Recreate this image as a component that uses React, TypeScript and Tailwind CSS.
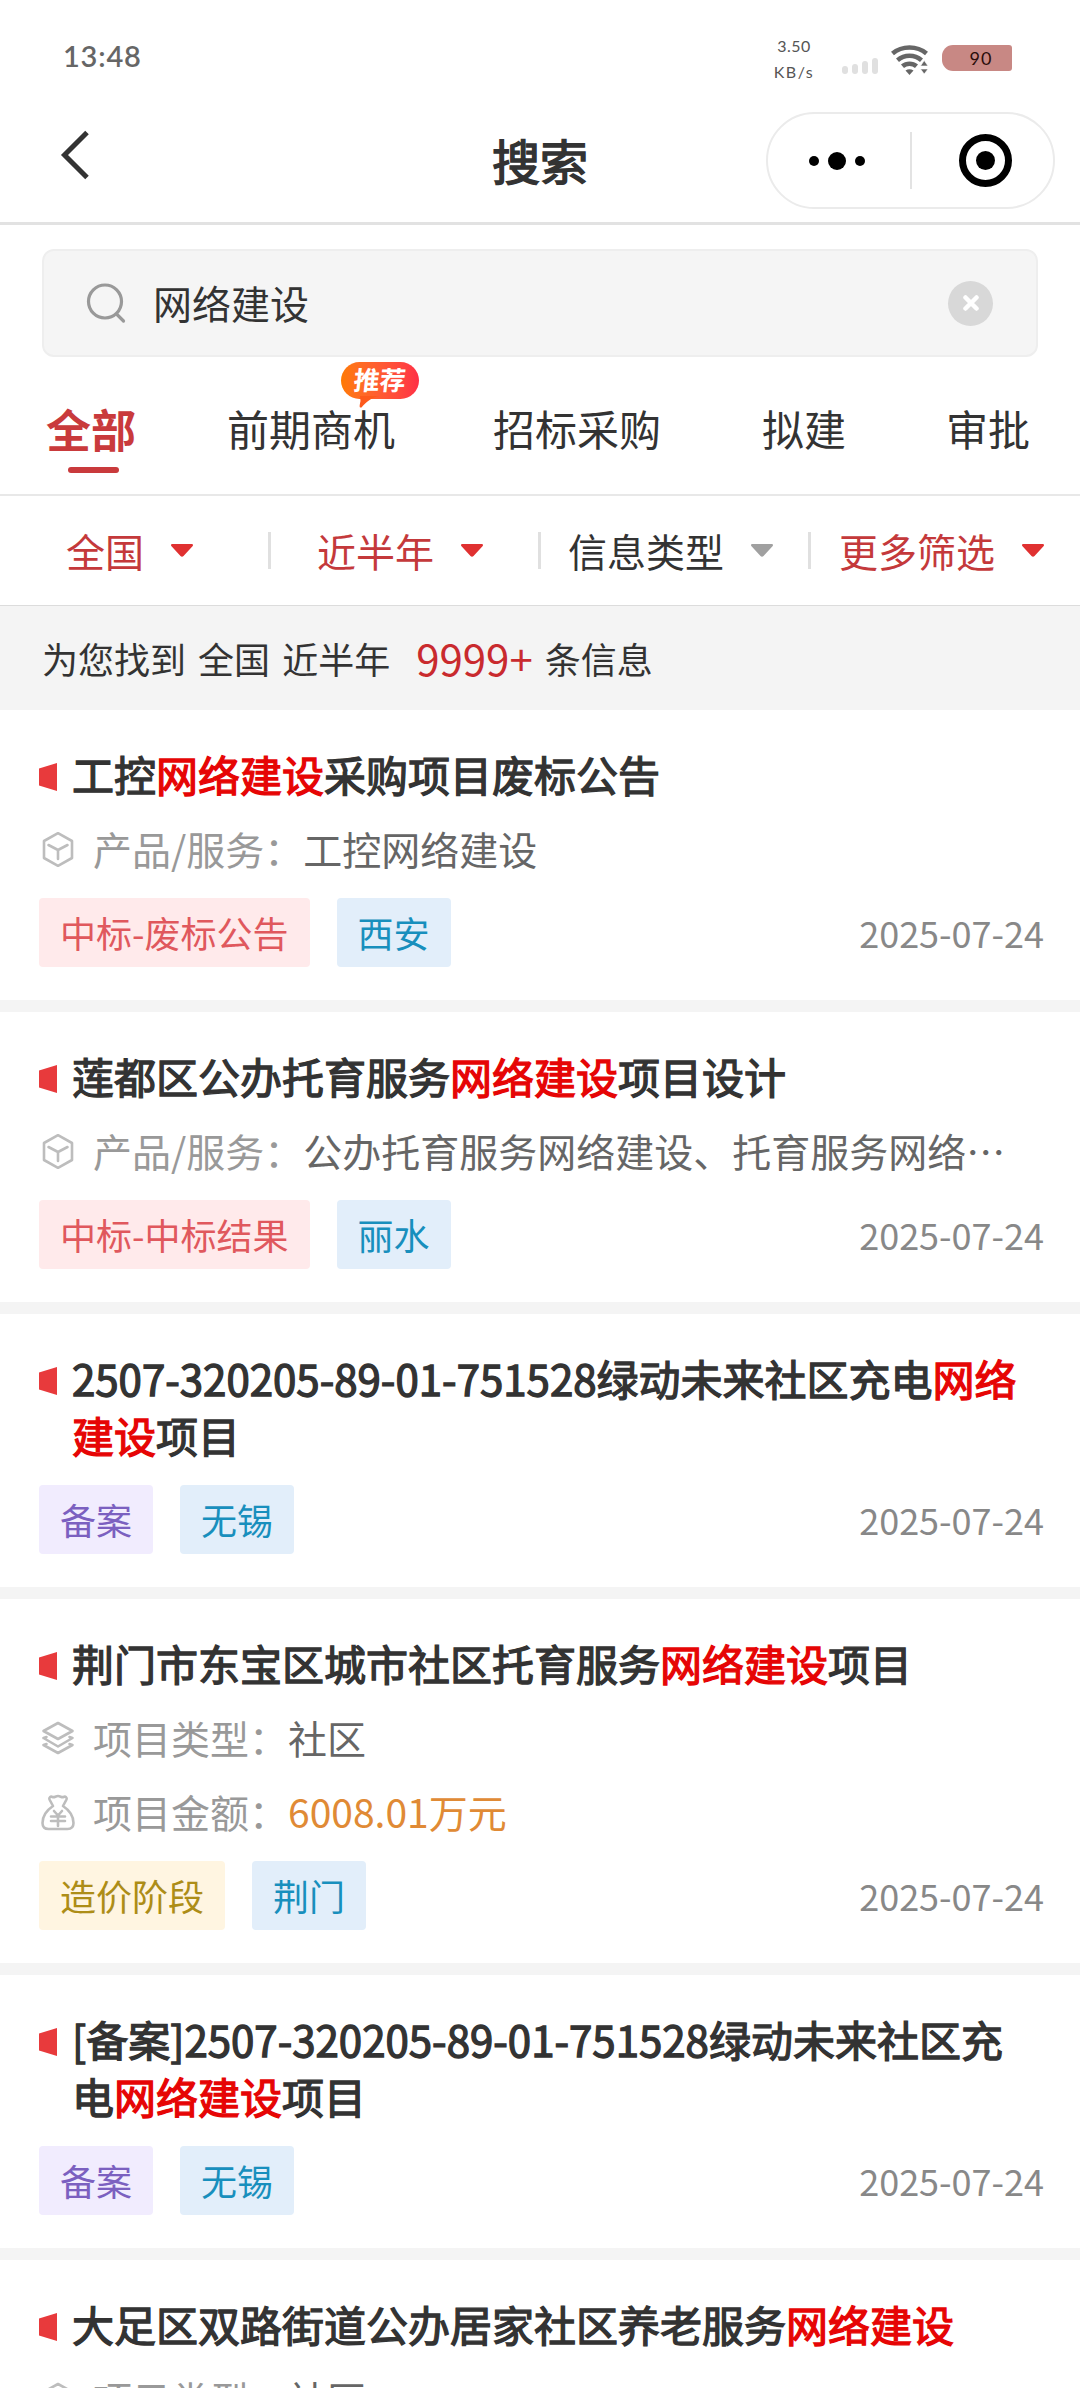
import type { ReactNode } from 'react';

type IconName = 'box' | 'layers' | 'money';

interface Meta {
  icon: IconName;
  label: string;
  value: string;
  amount?: boolean;
}

interface Notice {
  id: number;
  title: string;
  meta: Meta[];
  stage: string;
  tone: keyof typeof STAGE_CLASSES;
  city: string;
  date: string;
}

const KEYWORD = '网络建设';

const STAGE_CLASSES = {
  bid: 'bg-[#ffeaeb] text-[#e0585d]',
  record: 'bg-[#f1ecfe] text-[#7b60c0]',
  cost: 'bg-[#fff5e1] text-[#ad8d17]',
};

const TABS = [
  { name: '前期商机', className: 'ml-[90px]', hot: true },
  { name: '招标采购', className: 'ml-[98px]' },
  { name: '拟建', className: 'ml-[101px]' },
  { name: '审批', className: 'ml-[100px]' },
];

const FILTERS = [
  { name: '全国', active: true, className: 'pl-[66px]' },
  { name: '近半年', active: true, className: 'pl-[46px]' },
  { name: '信息类型', active: false, className: 'pl-[27px]' },
  { name: '更多筛选', active: true, className: 'pl-[28px]' },
];

const NOTICES: Notice[] = [
  {
    id: 1,
    title: '工控网络建设采购项目废标公告',
    meta: [{ icon: 'box', label: '产品/服务：', value: '工控网络建设' }],
    stage: '中标-废标公告',
    tone: 'bid',
    city: '西安',
    date: '2025-07-24',
  },
  {
    id: 2,
    title: '莲都区公办托育服务网络建设项目设计',
    meta: [{ icon: 'box', label: '产品/服务：', value: '公办托育服务网络建设、托育服务网络⋯' }],
    stage: '中标-中标结果',
    tone: 'bid',
    city: '丽水',
    date: '2025-07-24',
  },
  {
    id: 3,
    title: '2507-320205-89-01-751528绿动未来社区充电网络建设项目',
    meta: [],
    stage: '备案',
    tone: 'record',
    city: '无锡',
    date: '2025-07-24',
  },
  {
    id: 4,
    title: '荆门市东宝区城市社区托育服务网络建设项目',
    meta: [
      { icon: 'layers', label: '项目类型：', value: '社区' },
      { icon: 'money', label: '项目金额：', value: '6008.01万元', amount: true },
    ],
    stage: '造价阶段',
    tone: 'cost',
    city: '荆门',
    date: '2025-07-24',
  },
  {
    id: 5,
    title: '[备案]2507-320205-89-01-751528绿动未来社区充电网络建设项目',
    meta: [],
    stage: '备案',
    tone: 'record',
    city: '无锡',
    date: '2025-07-24',
  },
  {
    id: 6,
    title: '大足区双路街道公办居家社区养老服务网络建设',
    meta: [{ icon: 'layers', label: '项目类型：', value: '社区' }],
    stage: '造价阶段',
    tone: 'cost',
    city: '重庆',
    date: '2025-07-24',
  },
];

const ICON_PATHS: Record<IconName, ReactNode> = {
  box: (
    <>
      <path d="M18 2.200 32 10v17L18 34.800 4 27V10Z" />
      <path d="m8.500 14 9.500 5 9.500-5M18 19v9" />
    </>
  ),
  layers: (
    <>
      <path d="m18 3 14.500 8L18 19 3.500 11Z" />
      <path d="m3.500 18 3-1M3.500 18 18 26.500 32.500 18l-3-1" />
      <path d="m3.500 25 3-1M3.500 25 18 33 32.500 25l-3-1" />
    </>
  ),
  money: (
    <>
      <path d="M13 12 9.500 5.500c-.8-2 1-3.500 3-2.500 2 .8 3-1 5.500-1s3.500 1.800 5.500 1c2-1 3.800.5 3 2.500L23 12c6 4 10.500 10 10.500 17 0 4-2 6-6 6h-19c-4 0-6-2-6-6C2.500 22 7 16 13 12Z" />
      <path d="m14 17 4 4.500 4-4.500M11 22.500h14M11 27h14M18 21.500V32" />
    </>
  ),
};

function MetaIcon({ name }: { name: IconName }) {
  return (
    <svg
      viewBox="0 0 36 37"
      className="mt-[2px] w-9 h-[37px] shrink-0"
      fill="none"
      stroke="#bdbdbd"
      strokeWidth="2.600"
      strokeLinejoin="round"
      strokeLinecap="round"
    >
      {ICON_PATHS[name]}
    </svg>
  );
}

function StatusBar() {
  return (
    <div className="h-[100px] flex items-start pl-[63px] pr-[68px]">
      <span className="mt-[37px] font-['Lato'] text-[29px] leading-[38px] font-semibold tracking-[0.8px] text-[#666]">
        13:48
      </span>
      <div className="ml-auto mt-[33px] w-[44px] flex flex-col items-center font-['Lato'] text-[16px] leading-[26px] tracking-[0.5px] text-[#555]">
        <span>3.50</span>
        <span className="whitespace-nowrap tracking-[1.5px]">KB/s</span>
      </div>
      <div className="ml-[26px] mt-[58px] h-4 flex items-end gap-[4px]">
        <i className="w-[6px] h-2 rounded-sm bg-[#e0e0e0]" />
        <i className="w-[6px] h-[10px] rounded-sm bg-[#e0e0e0]" />
        <i className="w-[6px] h-[13px] rounded-sm bg-[#e0e0e0]" />
        <i className="w-[6px] h-4 rounded-sm bg-[#e0e0e0]" />
      </div>
      <svg viewBox="0 0 37 30" className="ml-[13px] mt-[45px] w-[37px] h-[30px]" fill="none" stroke="#666" strokeWidth="4.600">
        <path d="M1.500 8.500C11 .5 26 .5 35.500 8.500" />
        <path d="M6.500 15.200c7-6 17-6 24 0" />
        <path d="M11.500 21.300c4-3.500 10-3.500 14 0" />
        <path d="m14.500 25.500 4 4.500 4-4.500q-4-2.400-8 0Z" fill="#666" stroke="none" />
        <path d="m29.500 21 3.700-5.500L37 21ZM29.500 24H37l-3.800 5Z" fill="#666" stroke="#fff" strokeWidth=".6" />
      </svg>
      <div className="ml-[14px] mt-[45px] w-[70px] h-[26px] rounded-l-[11px] rounded-r-[3px] bg-[#c88884] pl-[8px] text-center font-['Lato'] text-[18px] leading-[26px] tracking-[1px] text-[#2a0d0b]">
        90
      </div>
    </div>
  );
}

function NavBar() {
  return (
    <div className="h-[125px] border-b-3 border-[#e2e2e2] grid grid-cols-[1fr_auto_1fr] items-start">
      <svg viewBox="0 0 30 50" className="ml-[60px] mt-[30px] w-[30px] h-[50px]" fill="none" stroke="#333" strokeWidth="5">
        <path d="M27 2.500 4.500 25 27 47.500" />
      </svg>
      <h1 className="mt-[24px] text-[48px] leading-[70px] text-[#333] [-webkit-text-stroke:1.5px]">搜索</h1>
      <div className="justify-self-end mr-[25px] mt-[12px] w-[289px] h-[97px] rounded-full border-2 border-[#ebebeb] flex items-center">
        <div className="w-[142px] pl-[41px] flex items-center gap-[9px]">
          <i className="size-[10px] rounded-full bg-black" />
          <i className="size-[18px] rounded-full bg-black" />
          <i className="size-[10px] rounded-full bg-black" />
        </div>
        <div className="w-[2px] h-[57px] bg-[#e3e3e3]" />
        <div className="ml-[47px] size-[53px] rounded-full border-[7px] border-black flex items-center justify-center">
          <i className="size-[19px] rounded-full bg-black" />
        </div>
      </div>
    </div>
  );
}

function SearchBox() {
  return (
    <div className="mx-[42px] mt-6 h-[108px] rounded-xl border-2 border-[#eee] bg-[#f5f5f5] flex items-center pl-[42px] pr-[43px]">
      <svg viewBox="0 0 42 42" className="size-[42px]" fill="none" stroke="#999" strokeWidth="3.200" strokeLinecap="round">
        <circle cx="19" cy="19.500" r="16.500" />
        <path d="m31 32.500 6.500 6.500" />
      </svg>
      <span className="ml-[25px] pb-[3px] text-[39px] leading-[56px] text-[#333]">{KEYWORD}</span>
      <span className="ml-auto size-[45px] rounded-full bg-[#d8d8d8] flex items-center justify-center">
        <svg viewBox="0 0 16 16" className="size-4" stroke="#fff" strokeWidth="4.500" strokeLinecap="round">
          <path d="m2.500 2.500 11 11M13.500 2.500l-11 11" />
        </svg>
      </span>
    </div>
  );
}

function HotBadge() {
  return (
    <span className="absolute left-[114px] -top-[37px] w-[78px] h-[37px] rounded-full bg-linear-to-r from-[#ff7a00] to-[#ff2f45] text-center text-[26px] leading-[34px] font-bold text-white">
      <span className="inline-block -skew-x-6">推荐</span>
      <svg viewBox="0 0 22 12" className="absolute left-[17px] top-[34px] w-[22px] h-3" fill="#fd5a1c">
        <path d="M2 0h19C13 2 8 6 3.500 11.500 1 12 1.500 10 2.500 5Z" />
      </svg>
    </span>
  );
}

function Tabs() {
  return (
    <div className="h-[139px] border-b-2 border-[#e8e8e8] flex items-start pl-[45px] pt-[42px] whitespace-nowrap">
      <div className="w-[92px] flex flex-col items-center">
        <span className="text-[45px] leading-[60px] font-bold text-[#c93a3c]">全部</span>
        <i className="ml-[4px] mt-[8px] w-[51px] h-[6px] rounded-full bg-[#c93a3c]" />
      </div>
      {TABS.map((tab) => (
        <div key={tab.name} className={`relative text-[42px] leading-[58px] text-[#333] ${tab.className}`}>
          {tab.name}
          {tab.hot && <HotBadge />}
        </div>
      ))}
    </div>
  );
}

function Filters() {
  return (
    <div className="h-[110px] border-b border-[#dcdcdc] grid grid-cols-4">
      {FILTERS.map((filter, i) => (
        <div key={filter.name} className="flex items-center">
          {i > 0 && <i className="-ml-[2px] w-[3px] h-[37px] bg-[#e0e0e0]" />}
          <span
            className={`pb-[2px] text-[39px] leading-[56px] whitespace-nowrap ${filter.className} ${
              filter.active ? 'text-[#c4393b]' : 'text-[#333]'
            }`}
          >
            {filter.name}
          </span>
          <svg viewBox="0 0 22 13" className="ml-[27px] w-[22px] h-[13px]" fill={filter.active ? '#e03131' : '#a0a0a0'}>
            <path d="M1.500 0h19c1.500 0 2 1.200 1 2.200l-9 9.800q-1.500 1.300-3 0l-9-9.800C-.5 1.200 0 0 1.500 0Z" />
          </svg>
        </div>
      ))}
    </div>
  );
}

// Stroke instead of a heavier weight: digits keep their regular width.
function Title({ text }: { text: string }) {
  const [before, after] = text.split(KEYWORD);
  return (
    <div className="flex items-start">
      <svg viewBox="0 0 18 28" className="mt-[18px] w-[18px] h-7 shrink-0" fill="#e83a3c">
        <path d="M0 5.500 18 0v28L0 22.500Z" />
      </svg>
      <h2 className="ml-[15px] w-[963px] text-[42px] leading-[57px] text-[#333] break-all [-webkit-text-stroke:1.3px]">
        {before}
        <span className="text-[#e60505]">{KEYWORD}</span>
        {after}
      </h2>
    </div>
  );
}

function NoticeCard({ notice }: { notice: Notice }) {
  return (
    <article className="bg-white pt-[35px] pb-[33px] pl-[39px] pr-9">
      <Title text={notice.title} />
      <div className="pt-[9px] pb-[13px]">
        {notice.meta.map((m) => (
          <div key={m.label} className="h-[74px] flex items-center pl-[1px] text-[39px] whitespace-nowrap">
            <MetaIcon name={m.icon} />
            <span className="ml-[17px] text-[#999]">{m.label}</span>
            <span className={m.amount ? 'text-[#e08a35]' : 'text-[#666]'}>{m.value}</span>
          </div>
        ))}
      </div>
      <div className="h-[69px] flex items-center gap-[27px] text-[36px] leading-[69px]">
        <span className={`rounded px-[21px] ${STAGE_CLASSES[notice.tone]}`}>{notice.stage}</span>
        <span className="rounded bg-[#e2eefa] px-[21px] text-[#188fbd]">{notice.city}</span>
        <span className="ml-auto text-[#888]">{notice.date}</span>
      </div>
    </article>
  );
}

export default function App() {
  return (
    <div
      lang="zh-CN"
      className="w-[1080px] h-[2388px] overflow-hidden bg-white font-['Noto_Sans_CJK_SC',sans-serif]"
    >
      <StatusBar />
      <NavBar />
      <SearchBox />
      <Tabs />
      <Filters />
      <div className="h-[104px] bg-[#f4f4f4] flex items-center pl-[42px] pb-[1px] text-[36px] text-[#333] whitespace-pre">
        <span className="[word-spacing:4px]">为您找到 全国 近半年</span>
        <span className="ml-[26px] mr-[12px] text-[42px] text-[#c92a2e]">9999+</span>
        <span>条信息</span>
      </div>
      <main className="flex flex-col gap-3 bg-[#f4f4f4]">
        {NOTICES.map((notice) => (
          <NoticeCard key={notice.id} notice={notice} />
        ))}
      </main>
    </div>
  );
}
